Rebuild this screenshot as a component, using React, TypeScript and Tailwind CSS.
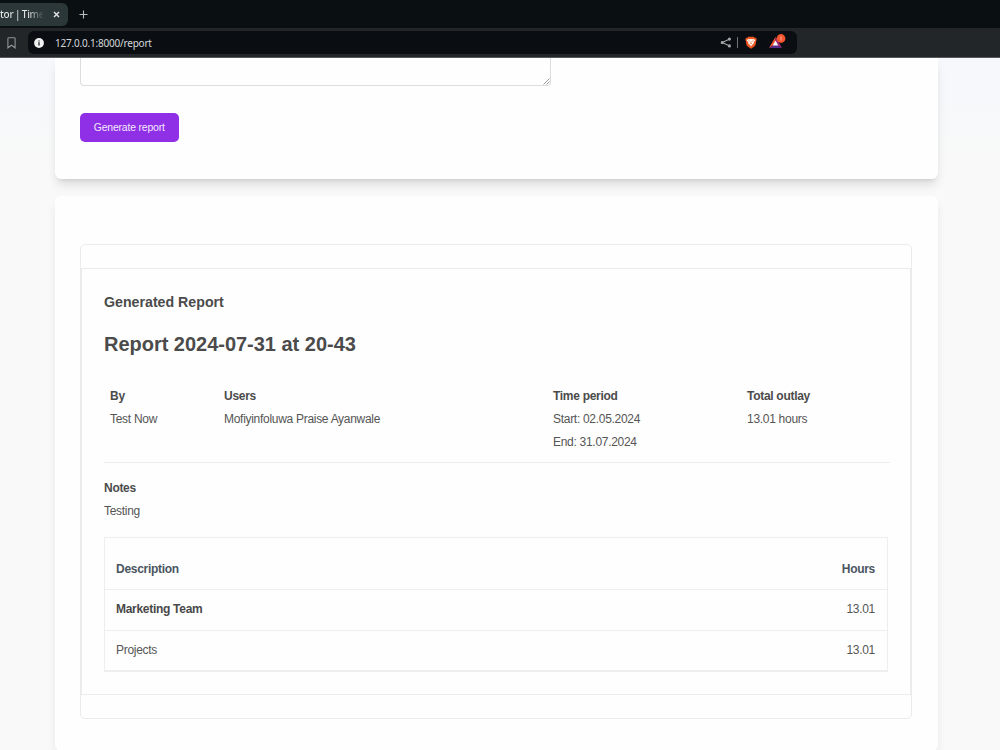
import React from 'react';

interface ReportColumn {
  title: string;
  lines: string[];
  width: string;
}

interface ReportRow {
  description: string;
  hours: string;
  bold?: boolean;
}

const columns: ReportColumn[] = [
  { title: 'By', lines: ['Test Now'], width: 'w-[114px]' },
  { title: 'Users', lines: ['Mofiyinfoluwa Praise Ayanwale'], width: 'w-[329px]' },
  { title: 'Time period', lines: ['Start: 02.05.2024', 'End: 31.07.2024'], width: 'w-[194px]' },
  { title: 'Total outlay', lines: ['13.01 hours'], width: 'w-[120px]' },
];

const rows: ReportRow[] = [
  { description: 'Marketing Team', hours: '13.01', bold: true },
  { description: 'Projects', hours: '13.01' },
];

const BrowserBar: React.FC = () => (
  <header className="h-[58px] shrink-0 bg-[#0a0f12] border-b border-[#56595b] font-['Noto_Sans',sans-serif]">
    <div className="h-7 flex items-center">
      <div className="w-[68px] h-[23px] mt-px bg-[#2b3738] rounded-r-[6px] flex items-center justify-between pr-[8px]">
        <span className="text-[10px] tracking-[-0.25px] [word-spacing:-0.8px] font-medium whitespace-nowrap bg-linear-to-r from-[#e4e7e7] from-65% to-[#2b3738] bg-clip-text text-transparent">
          tor | Time
        </span>
        <svg className="shrink-0" width="7" height="7" viewBox="0 0 7 7" stroke="#e4e7e7" strokeWidth="1.4">
          <path d="M1 1l5 5M6 1l-5 5" />
        </svg>
      </div>
      <svg className="ml-[11px] mt-px" width="9" height="9" viewBox="0 0 9 9" stroke="#b9bdbe" strokeWidth="1.1">
        <path d="M4.5 .5v8M.5 4.5h8" />
      </svg>
    </div>
    <div className="h-[29px] bg-[#222629] flex items-center">
      <svg className="ml-[7px] w-[9px] h-[12px]" viewBox="0 0 9 12" fill="none" stroke="#8f9496" strokeWidth="1.1">
        <path d="M.9 1.6a.8.8 0 0 1 .8-.8h5.6a.8.8 0 0 1 .8.8v9.2L4.5 8.2.9 10.8z" />
      </svg>
      <div className="ml-[12px] w-[768.5px] h-[23px] bg-[#0a0e12] rounded-[6px] flex items-center pl-[6px] pr-[11px]">
        <svg width="10" height="10" viewBox="0 0 10 10">
          <circle cx="5" cy="5" r="4.9" fill="#f1f2f2" />
          <path d="M5 4.3v3.2M5 2.4v1.1" stroke="#0a0e12" strokeWidth="1.2" />
        </svg>
        <span className="ml-[11px] text-[10px] tracking-[-0.21px] leading-none text-[#d5d8da]">127.0.0.1:8000/report</span>
        <svg className="ml-auto" width="12" height="11" viewBox="0 0 12 11" stroke="#a3a7a9" strokeWidth="1.1" fill="#a3a7a9">
          <path d="M2.2 5.5l7-3.3M2.2 5.5l7 3.3" />
          <circle cx="2.2" cy="5.5" r="1" />
          <circle cx="9.4" cy="2.1" r="1" />
          <circle cx="9.4" cy="8.9" r="1" />
        </svg>
        <span className="ml-[5px] w-px h-[11px] bg-[#6f7477]" />
        <svg className="ml-[7px]" width="12" height="13" viewBox="0 0 12 13">
          <path d="M3.2.7h5.6l1.1 1.2 1.1-.1.7 2-.5 1.3-.8 4.1L9 10.7l-3 2-3-2-1.4-1.5L.8 5.1.3 3.8l.7-2 1.1.1z" fill="#f0561f" />
          <path d="M3 2.9l1.8.4L6 3l1.2.3L9 2.9l1.2 1.5-1.7 2.2.2 1.2L6.9 8.9 6 10.6 5.1 8.9 3.3 7.8l.2-1.2-1.7-2.2z" fill="#fff" />
          <path d="M3.2 4.7l1.8.6M8.8 4.7L7 5.3M6 5.2v2M4.6 8l1.4-.6L7.4 8" stroke="#f0561f" strokeWidth=".6" fill="none" />
        </svg>
        <svg className="ml-[12px] -mt-[2px]" width="17" height="15" viewBox="0 0 17 15">
          <path d="M6.5 2.7L0 13.9l6.5-4z" fill="#f0522b" />
          <path d="M0 13.9h13l-6.5-4z" fill="#5b2b8c" />
          <path d="M6.5 2.7L13 13.9l-6.5-4z" fill="#a02a78" />
          <path d="M6.5 6.6l2.8 4.8H3.7z" fill="#fff" />
          <circle cx="12" cy="4.5" r="4.4" fill="#f4552f" />
          <path d="M12 2.5v4" stroke="#ffb7a0" strokeWidth=".9" />
        </svg>
      </div>
    </div>
  </header>
);

const GenerateCard: React.FC = () => (
  <section className="h-[121px] shrink-0 bg-[#fefefe] rounded-b-[6px] px-[25.5px] shadow-[0_7px_11px_-2px_rgba(0,0,0,0.13),0_3px_4px_-3px_rgba(0,0,0,0.13)]">
    <div className="w-[471px] h-[28px] border border-t-0 border-[#dcdddf] rounded-b-[4px] flex justify-end items-end">
      <svg width="7" height="7" viewBox="0 0 7 7" stroke="#9a9a9a" strokeWidth="1">
        <path d="M.5 6.5l6-6M3.5 6.5l3-3" />
      </svg>
    </div>
    <button className="mt-[27px] w-[98.5px] h-[29px] pt-px bg-[#9030e6] rounded-[5px] text-[10.4px] tracking-[-0.17px] leading-none text-[#f3e8ff]">
      Generate report
    </button>
  </section>
);

const ReportTable: React.FC = () => (
  <div className="mt-[14px] mr-[22px] border border-b-2 border-[#eeeeef]">
    <div className="h-[52px] pt-[11px] px-[11px] flex items-center justify-between border-b border-[#eeeeef] font-bold text-[#4a5560]">
      <span>Description</span>
      <span className="mr-px">Hours</span>
    </div>
    {rows.map((row, index) => (
      <div
        key={row.description}
        className={`px-[11px] pb-px flex items-center justify-between ${index < rows.length - 1 ? 'h-[41px] border-b border-[#eeeeef]' : 'h-[39px]'}`}
      >
        <span className={row.bold ? 'font-bold text-[#484848]' : ''}>{row.description}</span>
        <span className="mr-px">{row.hours}</span>
      </div>
    ))}
  </div>
);

const ReportCard: React.FC = () => (
  <section className="mt-[17px] h-[555px] shrink-0 bg-[#fefefe] rounded-[6px] pt-[48px] px-[25.5px] shadow-[0_7px_11px_-2px_rgba(0,0,0,0.1)]">
    <div className="h-[475px] border border-[#ebebeb] rounded-[5px] pt-[23px]">
      <div className="h-[427px] border border-[#ebebeb] pl-[22px] text-[12px] tracking-[-0.29px] leading-[23px] text-[#555]">
        <h3 className="mt-[22px] text-[14.2px] tracking-normal leading-[22px] font-bold text-[#4b4b4b]">Generated Report</h3>
        <h2 className="mt-[17px] text-[20px] tracking-[-0.02px] leading-[28px] font-bold text-[#4b4b4b]">Report 2024-07-31 at 20-43</h2>
        <div className="mt-[26px] pt-px h-[79px] mr-[20px] pl-[6px] flex border-b border-[#ededed]">
          {columns.map((column) => (
            <div key={column.title} className={column.width}>
              <div className="font-bold text-[#4b4b4b]">{column.title}</div>
              {column.lines.map((line) => (
                <div key={line}>{line}</div>
              ))}
            </div>
          ))}
        </div>
        <div className="mt-[14px] font-bold text-[#4b4b4b]">Notes</div>
        <div>Testing</div>
        <ReportTable />
      </div>
    </div>
  </section>
);

const App: React.FC = () => {
  return (
    <div className="w-[1000px] h-[750px] flex flex-col overflow-hidden bg-[#f8f9f8] font-['Liberation_Sans',Arial,sans-serif]">
      <BrowserBar />
      <main className="flex-1 min-h-0 overflow-hidden flex flex-col pl-[54.5px] pr-[62.5px] bg-linear-to-b from-[#f7f8fb] from-5% to-[#f8f9f8] to-15%">
        <GenerateCard />
        <ReportCard />
      </main>
    </div>
  );
};

export default App;
